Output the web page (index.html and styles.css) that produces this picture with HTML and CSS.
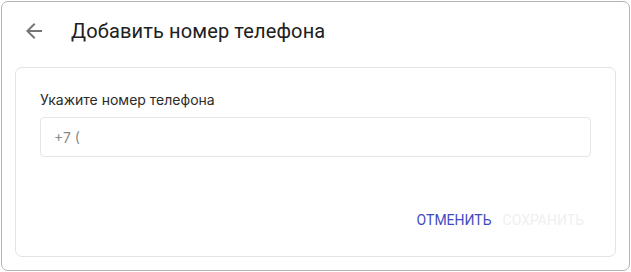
FILE: index.html
```html
<!DOCTYPE html>
<html lang="ru">
<head>
<meta charset="utf-8">
<title>Добавить номер телефона</title>
<link rel="stylesheet" href="styles.css">
</head>
<body>
<div class="frame">
  <div class="header">
    <button class="back" aria-label="Назад">
      <svg width="24" height="24" viewBox="0 0 24 24"><path d="M20 11H7.83l5.59-5.59L12 4l-8 8 8 8 1.41-1.41L7.83 13H20v-2z" fill="currentColor"/></svg>
    </button>
    <h1 class="title">Добавить номер телефона</h1>
  </div>
  <div class="card">
    <label class="label" for="phone">Укажите номер телефона</label>
    <input class="input" id="phone" type="text" placeholder="+7 (">
    <div class="actions">
      <button class="btn btn-cancel">Отменить</button>
      <button class="btn btn-save" disabled>Сохранить</button>
    </div>
  </div>
</div>
</body>
</html>
```
FILE: styles.css
```css
* { box-sizing: border-box; }
html, body { margin: 0; padding: 0; background: #fff; }
body { font-family: Roboto, "Noto Sans", sans-serif; }
.frame {
  width: 629px;
  height: 270px;
  margin: 1px 0 0 1px;
  border: 1px solid #b3b3b3;
  border-radius: 7px;
  padding: 17px 13px 0 13px;
  display: flex;
  flex-direction: column;
}
.header {
  display: flex;
  align-items: center;
  height: 24px;
  padding-left: 7px;
  gap: 25px;
}
.back {
  border: 0;
  background: none;
  padding: 0;
  width: 24px;
  height: 24px;
  color: #767676;
  display: flex;
}
.title {
  margin: 0;
  font-family: Roboto, sans-serif;
  font-weight: 400;
  font-size: 20px;
  letter-spacing: 0.13px;
  line-height: 24px;
  color: #202020;
}
.card {
  margin-top: 24px;
  height: 190px;
  border: 1px solid #e3e3e3;
  border-radius: 7px;
  padding: 22px 24px 18px 24px;
  display: flex;
  flex-direction: column;
}
.label {
  font-family: Inter, sans-serif;
  font-size: 14px;
  line-height: 20px;
  color: #2b2b2b;
}
.input {
  margin-top: 7px;
  height: 40px;
  border: 1px solid #e6e6e6;
  border-radius: 4px;
  padding: 0 13px;
  font-family: Inter, sans-serif;
  font-size: 14px;
  color: #333;
  outline: none;
}
.input::placeholder { color: #8a8a8a; }
.actions {
  margin-top: auto;
  display: flex;
  justify-content: flex-end;
  gap: 1px;
  padding-right: 2px;
}
.btn {
  border: 0;
  background: none;
  height: 36px;
  padding: 0 5px;
  font-family: Roboto, sans-serif;
  font-size: 14px;
  text-transform: uppercase;
  cursor: pointer;
}
.btn-cancel { color: #3f4cbf; }
.btn-save { color: #f0f0f0; cursor: default; }
```
